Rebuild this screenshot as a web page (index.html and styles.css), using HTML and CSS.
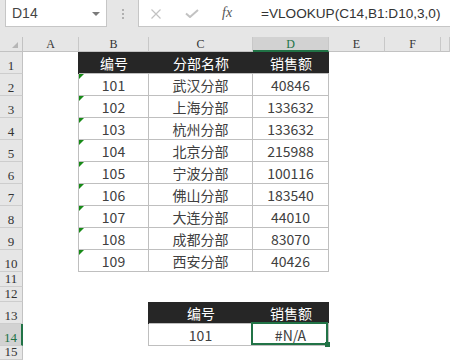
FILE: index.html
```html
<!DOCTYPE html>
<html>
<head>
<meta charset="utf-8">
<link rel="stylesheet" href="styles.css">
</head>
<body>
<div class="app">
  <div class="toolbar">
    <div class="namebox">
      <span class="nb-text">D14</span>
      <svg class="caret" width="8" height="4" viewBox="0 0 8 4"><path d="M0 0 H8 L4 4 Z" fill="#7a7a7a"/></svg>
    </div>
    <div class="dots"><i></i><i></i><i></i></div>
    <div class="fbar">
      <svg class="ic-x" width="10" height="10" viewBox="0 0 10 10"><path d="M0.5 0.5 L9.5 9.5 M9.5 0.5 L0.5 9.5" stroke="#c2c2c2" stroke-width="1.2" fill="none"/></svg>
      <svg class="ic-ok" width="14" height="9" viewBox="0 0 14 9"><path d="M1 4.5 L5 8 L13 1" stroke="#c2c2c2" stroke-width="2" fill="none"/></svg>
      <span class="fx">fx</span>
      <span class="formula">=VLOOKUP(C14,B1:D10,3,0)</span>
    </div>
  </div>

  <div class="sheet">
    <!-- column headers -->
    <div class="corner"><span class="corner-tri"></span></div>
    <div class="ch">A</div>
    <div class="ch">B</div>
    <div class="ch">C</div>
    <div class="ch sel">D</div>
    <div class="ch">E</div>
    <div class="ch">F</div>
    <div class="ch"></div>

    <!-- row 1 -->
    <div class="rh">1</div><div class="c"></div>
    <div class="c hd l">编号</div><div class="c hd">分部名称</div><div class="c hd">销售额</div>
    <div class="c"></div><div class="c"></div><div class="c"></div>

    <div class="rh">2</div><div class="c"></div>
    <div class="c t l tri">101</div><div class="c t">武汉分部</div><div class="c t">40846</div>
    <div class="c"></div><div class="c"></div><div class="c"></div>

    <div class="rh">3</div><div class="c"></div>
    <div class="c t l tri">102</div><div class="c t">上海分部</div><div class="c t">133632</div>
    <div class="c"></div><div class="c"></div><div class="c"></div>

    <div class="rh">4</div><div class="c"></div>
    <div class="c t l tri">103</div><div class="c t">杭州分部</div><div class="c t">133632</div>
    <div class="c"></div><div class="c"></div><div class="c"></div>

    <div class="rh">5</div><div class="c"></div>
    <div class="c t l tri">104</div><div class="c t">北京分部</div><div class="c t">215988</div>
    <div class="c"></div><div class="c"></div><div class="c"></div>

    <div class="rh">6</div><div class="c"></div>
    <div class="c t l tri">105</div><div class="c t">宁波分部</div><div class="c t">100116</div>
    <div class="c"></div><div class="c"></div><div class="c"></div>

    <div class="rh">7</div><div class="c"></div>
    <div class="c t l tri">106</div><div class="c t">佛山分部</div><div class="c t">183540</div>
    <div class="c"></div><div class="c"></div><div class="c"></div>

    <div class="rh">8</div><div class="c"></div>
    <div class="c t l tri">107</div><div class="c t">大连分部</div><div class="c t">44010</div>
    <div class="c"></div><div class="c"></div><div class="c"></div>

    <div class="rh">9</div><div class="c"></div>
    <div class="c t l tri">108</div><div class="c t">成都分部</div><div class="c t">83070</div>
    <div class="c"></div><div class="c"></div><div class="c"></div>

    <div class="rh">10</div><div class="c"></div>
    <div class="c t l tri">109</div><div class="c t">西安分部</div><div class="c t">40426</div>
    <div class="c"></div><div class="c"></div><div class="c"></div>

    <div class="rh">11</div><div class="c"></div><div class="c"></div><div class="c"></div><div class="c"></div><div class="c"></div><div class="c"></div><div class="c"></div>
    <div class="rh">12</div><div class="c"></div><div class="c"></div><div class="c"></div><div class="c"></div><div class="c"></div><div class="c"></div><div class="c"></div>

    <div class="rh">13</div><div class="c"></div><div class="c"></div>
    <div class="c hd l">编号</div><div class="c hd">销售额</div>
    <div class="c"></div><div class="c"></div><div class="c"></div>

    <div class="rh rsel">14</div><div class="c"></div><div class="c"></div>
    <div class="c t l">101</div><div class="c t active">#N/A<span class="handle"></span></div>
    <div class="c"></div><div class="c"></div><div class="c"></div>

    <div class="rh">15</div><div class="c"></div><div class="c"></div><div class="c"></div><div class="c"></div><div class="c"></div><div class="c"></div><div class="c"></div>
  </div>
</div>
</body>
</html>
```

FILE: styles.css
```css
html, body {
  margin: 0;
  padding: 0;
  background: #ffffff;
}
.app {
  width: 450px;
  height: 360px;
  overflow: hidden;
  background: #ffffff;
}
.toolbar {
  height: 37px;
  background: #e6e6e6;
  display: flex;
  align-items: flex-start;
}
.namebox {
  box-sizing: border-box;
  margin-top: -1px;
  margin-left: 5px;
  width: 102px;
  height: 28px;
  background: #fff;
  border: 1px solid #c6c6c6;
  display: flex;
  align-items: center;
  justify-content: space-between;
  padding: 0 6px 0 6px;
}
.nb-text {
  font-family: "Liberation Sans", Arial, sans-serif;
  font-size: 14px;
  color: #444;
}
.caret { display: block; margin-top: 1px; }
.dots {
  width: 31px;
  height: 27px;
  display: flex;
  flex-direction: column;
  align-items: center;
  justify-content: center;
  gap: 2px;
}
.dots i {
  display: block;
  width: 2px;
  height: 2px;
  background: #b0b0b0;
}
.fbar {
  box-sizing: border-box;
  margin-top: -1px;
  flex: 1;
  height: 28px;
  background: #fff;
  border: 1px solid #c6c6c6;
  border-right: none;
  display: flex;
  align-items: center;
  padding-left: 12px;
}
.ic-x { display: block; margin-top: 1px; }
.ic-ok { display: block; margin-left: 24px; margin-top: 1px; }
.fx {
  margin-left: 23px;
  width: 12px;
  font-family: "Liberation Serif", "Times New Roman", serif;
  font-style: italic;
  font-size: 14px;
  color: #555;
}
.formula {
  margin-left: 27px;
  font-family: "Liberation Sans", Arial, sans-serif;
  font-size: 13.6px;
  color: #333;
  white-space: nowrap;
}

.sheet {
  display: grid;
  grid-template-columns: 23px 56px 70px 104px 76px 56px 56px 1fr;
  grid-template-rows: 15px repeat(10, 22px) 15px 15px 22px 22px 14px;
}
.corner {
  box-sizing: border-box;
  background: #e6e6e6;
  border-right: 1px solid #c2c2c2;
  border-bottom: 1px solid #c2c2c2;
  position: relative;
}
.corner-tri {
  position: absolute;
  right: 4px;
  bottom: 3px;
  width: 0;
  height: 0;
  border-left: 6px solid transparent;
  border-bottom: 6px solid #b6b6b6;
}
.ch {
  box-sizing: border-box;
  background: #e6e6e6;
  border-right: 1px solid #c8c8c8;
  border-bottom: 1px solid #c2c2c2;
  display: flex;
  align-items: center;
  justify-content: center;
  font-family: "Liberation Serif", "DejaVu Serif", serif;
  font-size: 12px;
  color: #333;
  padding-top: 1px;
}
.ch.sel {
  background: #d2d2d2;
  color: #217346;
  border-bottom: 2px solid #217346;
}
.rh {
  box-sizing: border-box;
  background: #e6e6e6;
  border-right: 1px solid #c2c2c2;
  border-bottom: 1px solid #cdcdcd;
  display: flex;
  align-items: flex-end;
  justify-content: center;
  font-family: "Liberation Serif", "DejaVu Serif", serif;
  font-size: 13px;
  line-height: 13px;
  color: #333;
  padding-bottom: 1px;
}
.rh.rsel {
  background: #d2d2d2;
  color: #217346;
  border-right: 2px solid #217346;
}
.c {
  box-sizing: border-box;
  display: flex;
  align-items: center;
  justify-content: center;
  font-family: "Noto Sans CJK SC", "Noto Sans", sans-serif;
  font-size: 14px;
  color: #404040;
  position: relative;
  white-space: nowrap;
}
.hd {
  background: #262626;
  color: #ffffff;
  border-bottom: 1px solid #bfbfbf;
}
.hd.l { box-shadow: -1px 0 0 #262626; }
.t {
  border-right: 1px solid #bfbfbf;
  border-bottom: 1px solid #bfbfbf;
  background: #fff;
}
.t.l { box-shadow: -1px 0 0 #bfbfbf; }
.tri::before {
  content: "";
  position: absolute;
  left: 0;
  top: 0;
  width: 0;
  height: 0;
  border-top: 5px solid #178a17;
  border-right: 5px solid transparent;
}
.active::after {
  content: "";
  position: absolute;
  left: -2px;
  top: -2px;
  right: 0;
  bottom: 0;
  border: 2px solid #217346;
}
.handle {
  position: absolute;
  right: -2px;
  bottom: -2px;
  width: 5px;
  height: 5px;
  background: #217346;
  z-index: 2;
}
```
